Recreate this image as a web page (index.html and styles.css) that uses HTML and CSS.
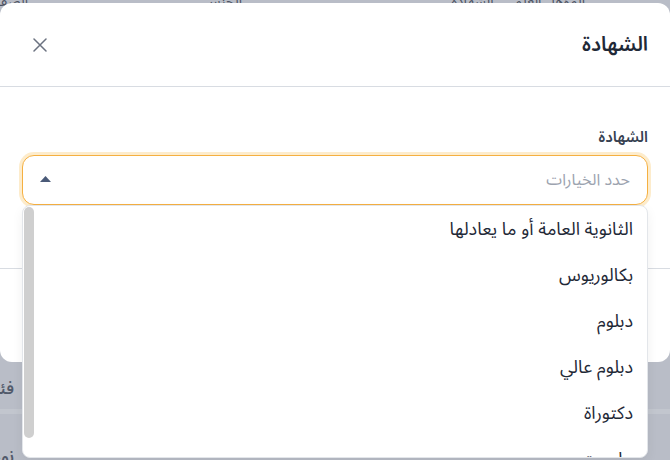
FILE: index.html
```html
<!DOCTYPE html>
<html lang="ar" dir="rtl">
<head>
<meta charset="utf-8">
<title>الشهادة</title>
<link rel="stylesheet" href="styles.css">
</head>
<body>
<div class="page">
  <div class="bg-head">
    <span class="bg-h1">المؤهل العلمي : الشهادة</span>
    <span class="bg-h2">الجنس</span>
    <span class="bg-h3">الصف</span>
  </div>
  <div class="bg-spacer"></div>
  <div class="bg-row"><span class="bg-cell">فئة</span></div>
  <div class="bg-row bg-row-alt"><span class="bg-cell">نوع</span></div>
</div>

<div class="modal">
  <div class="modal-header">
    <h2 class="modal-title">الشهادة</h2>
    <button class="close-btn" aria-label="إغلاق">
      <svg width="14" height="14" viewBox="0 0 14 14"><path d="M1 1L13 13M13 1L1 13" stroke="#6b7280" stroke-width="1.5" stroke-linecap="round"/></svg>
    </button>
  </div>
  <div class="modal-body">
    <label class="field-label">الشهادة</label>
    <div class="select-wrap">
      <div class="select">
        <span class="placeholder">حدد الخيارات</span>
        <svg class="caret" width="11" height="6" viewBox="0 0 11 6"><path d="M0 6L5.5 0L11 6Z" fill="#4a5a78"/></svg>
      </div>
      <div class="dropdown">
        <div class="scrollbar"></div>
        <ul class="options">
          <li>الثانوية العامة أو ما يعادلها</li>
          <li>بكالوريوس</li>
          <li>دبلوم</li>
          <li>دبلوم عالي</li>
          <li>دكتوراة</li>
          <li>ماجستير</li>
        </ul>
      </div>
    </div>
  </div>
  <div class="modal-footer"></div>
</div>
</body>
</html>
```

FILE: styles.css
```css
* { box-sizing: border-box; }
html, body { margin: 0; padding: 0; }
body {
  width: 670px;
  height: 460px;
  overflow: hidden;
  background: #b9bdc7;
  font-family: "Noto Sans Arabic", "Noto Sans", "DejaVu Sans", sans-serif;
  position: relative;
}
.page { width: 670px; height: 460px; }
.bg-head {
  height: 16px;
  margin-top: -13px;
  position: relative;
  font-size: 14px;
  color: #4b5262;
}
.bg-h1 { position: absolute; right: 85px; top: 0; white-space: nowrap; }
.bg-h2 { position: absolute; right: 428px; top: 0; }
.bg-h3 { position: absolute; right: 642px; top: 0; }
.bg-spacer { height: 365px; }
.bg-row {
  height: 46px;
  display: flex;
  align-items: center;
  padding-right: 656px;
  font-size: 16px;
  font-weight: 600;
  color: #525a6b;
  border-bottom: 5px solid #c2c6ce;
}
.bg-row-alt { height: 50px; align-items: flex-start; padding-top: 26px; border-bottom: none; }
.bg-cell { white-space: nowrap; }

.modal {
  position: absolute;
  top: 3px;
  left: 0;
  width: 670px;
  height: 359px;
  background: #fff;
  border-radius: 12px;
  display: flex;
  flex-direction: column;
}
.modal-header {
  height: 84px;
  flex: none;
  display: flex;
  align-items: center;
  justify-content: space-between;
  padding: 0 22px 0 32px;
  border-bottom: 1px solid #d8dce2;
}
.modal-title {
  margin: 0;
  font-size: 20px;
  font-weight: 600;
  color: #1f2937;
  line-height: 1;
}
.close-btn {
  border: 0;
  background: none;
  padding: 0;
  width: 16px;
  height: 16px;
  display: flex;
  align-items: center;
  justify-content: center;
  cursor: pointer;
}
.modal-body {
  height: 182px;
  flex: none;
  padding: 40px 22px 0 22px;
  border-bottom: 1px solid #d8dce2;
}
.field-label {
  display: block;
  height: 20px;
  line-height: 20px;
  font-size: 15px;
  font-weight: 600;
  color: #374151;
  margin-bottom: 8px;
}
.select-wrap { position: relative; }
.select {
  height: 50px;
  border: 1.5px solid #f5b041;
  border-radius: 12px;
  box-shadow: 0 0 0 3px #fdeccc;
  display: flex;
  align-items: center;
  justify-content: space-between;
  padding: 0 17px 0 17px;
  background: #fff;
}
.placeholder {
  font-size: 16px;
  color: #9ca3af;
}
.caret { display: block; margin-top: -3px; }
.dropdown {
  position: absolute;
  top: 50px;
  left: 0;
  right: 0;
  height: 253px;
  background: #fff;
  border: 1px solid #e3e6ea;
  border-radius: 8px;
  box-shadow: 0 4px 12px rgba(0,0,0,0.06);
  overflow: hidden;
  z-index: 5;
}
.scrollbar {
  position: absolute;
  left: 1px;
  top: 1px;
  width: 10px;
  height: 231px;
  background: #cfcfcf;
  border-radius: 5px;
}
.options {
  list-style: none;
  margin: 0;
  padding: 0 14px 0 0;
}
.options li {
  height: 46px;
  line-height: 46px;
  font-size: 18px;
  color: #1f2937;
  white-space: nowrap;
}
.modal-footer { flex: 1; }
```
